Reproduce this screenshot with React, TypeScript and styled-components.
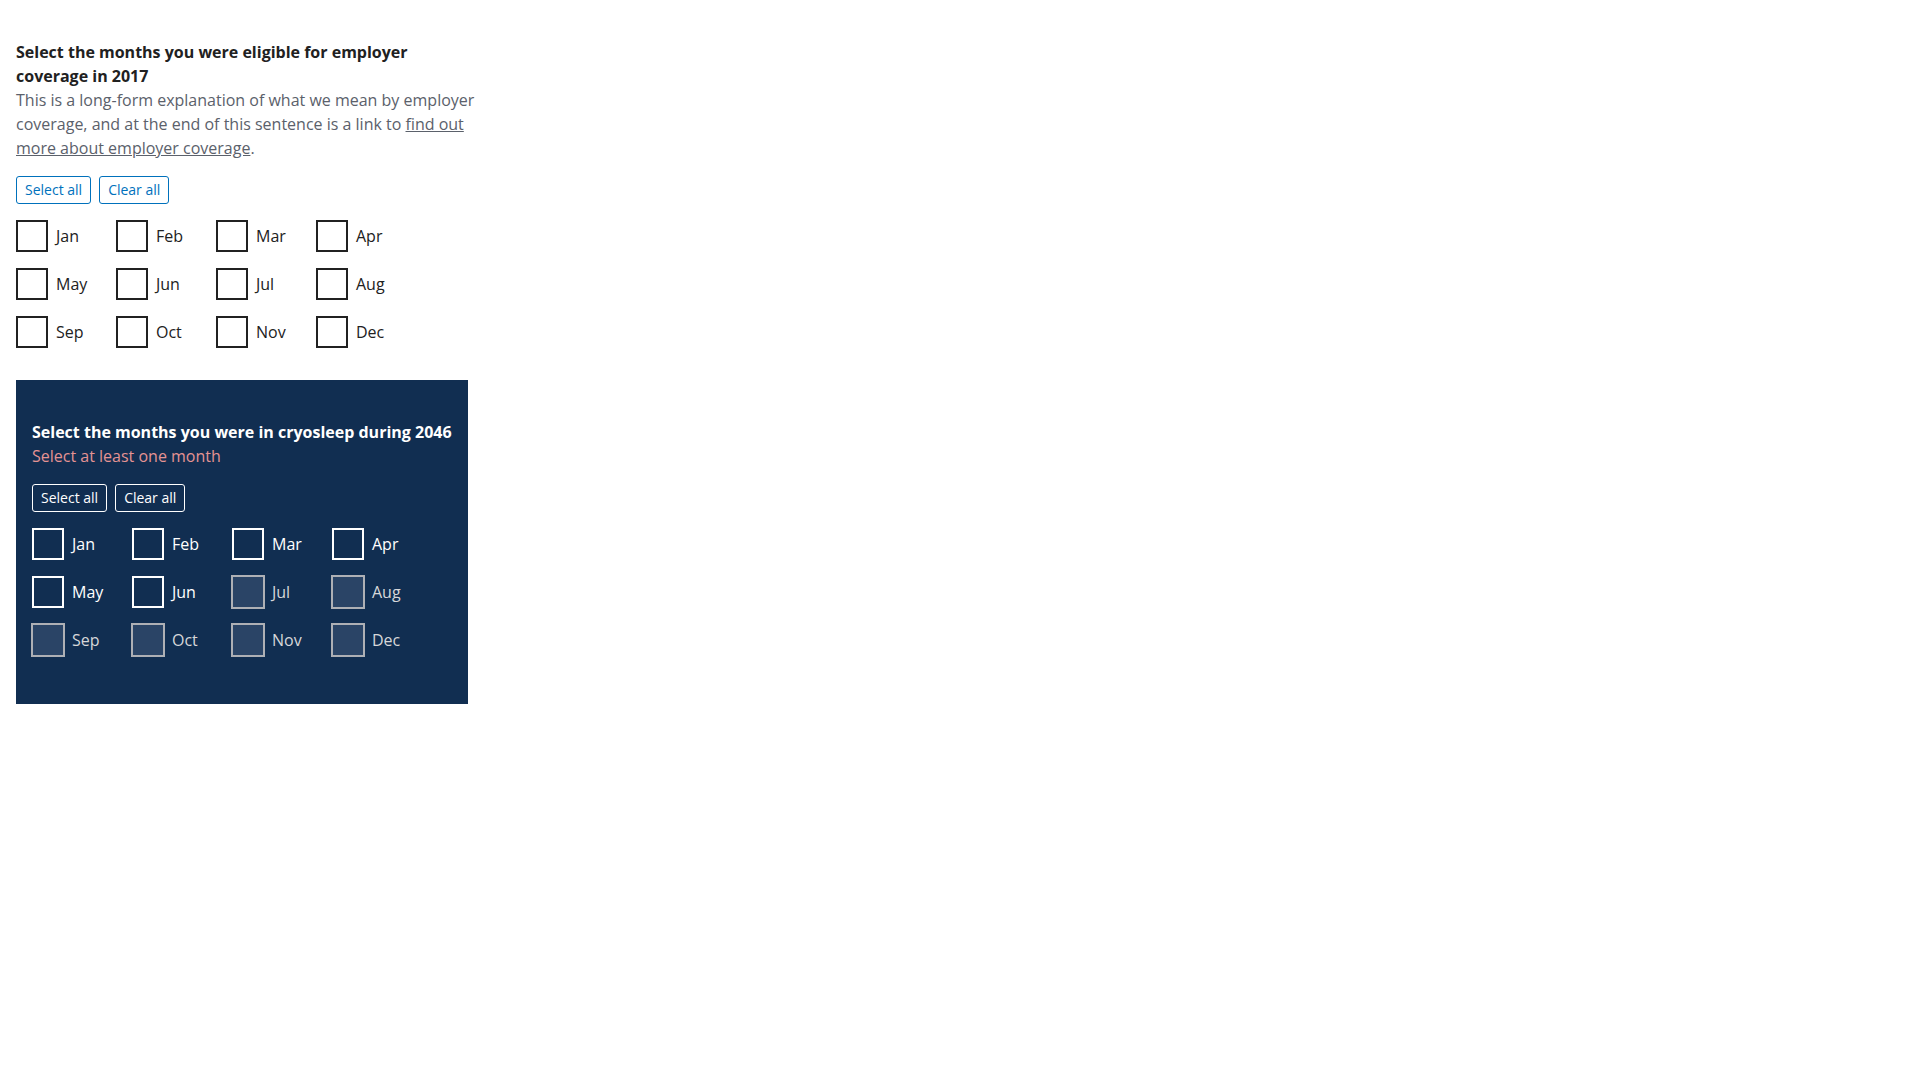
import React from "react";
import styled, { createGlobalStyle, css } from "styled-components";

const GlobalStyle = createGlobalStyle`
  html, body { margin: 0; padding: 0; background: #ffffff; }
  body { font-family: "Open Sans", "Liberation Sans", sans-serif; color: #212121; }
  * { box-sizing: border-box; }
`;

const Page = styled.div`
  padding: 16px;
  display: flex;
  flex-direction: column;
  align-items: flex-start;
`;

const Panel = styled.div`
  background: #112e51;
  width: 452px;
  padding: 16px 16px 48px;
  margin-top: 32px;
`;

const Fieldset = styled.fieldset`
  border: 0;
  padding: 0;
  margin: 24px 0 0;
  min-width: 0;
`;

const Legend = styled.legend<{ $inverse?: boolean }>`
  padding: 0;
  max-width: 460px;
  font-size: 16px;
  line-height: 24px;
  font-weight: 700;
  color: ${(p) => (p.$inverse ? "#ffffff" : "#212121")};
`;

const Hint = styled.div`
  max-width: 460px;
  font-size: 16px;
  line-height: 24px;
  color: #5b616b;
`;

const HintLink = styled.a`
  color: #5b616b;
  text-decoration: underline;
`;

const ErrorMsg = styled.div`
  font-size: 16px;
  line-height: 24px;
  color: #e59393;
`;

const ButtonRow = styled.div`
  display: flex;
  gap: 8px;
  margin-top: 16px;
`;

const SmallButton = styled.button<{ $inverse?: boolean }>`
  height: 28px;
  padding: 0 8px;
  border-radius: 3px;
  background: transparent;
  font-family: "Open Sans", "Liberation Sans", sans-serif;
  font-size: 14px;
  line-height: 26px;
  cursor: pointer;
  border: 1px solid ${(p) => (p.$inverse ? "#ffffff" : "#0071bc")};
  color: ${(p) => (p.$inverse ? "#ffffff" : "#0071bc")};
`;

const MonthGrid = styled.div`
  display: grid;
  grid-template-columns: repeat(4, 100px);
  row-gap: 16px;
  margin-top: 16px;
`;

const Choice = styled.label`
  display: flex;
  align-items: center;
  gap: 8px;
  height: 32px;
`;

const Box = styled.span<{ $inverse?: boolean; $disabled?: boolean }>`
  display: block;
  flex: none;
  width: 32px;
  height: 32px;
  border: 2px solid ${(p) => (p.$inverse ? "#ffffff" : "#212121")};
  background: transparent;
  ${(p) =>
    p.$disabled &&
    css`
      width: 34px;
      height: 34px;
      margin: -1px -1px -1px -1px;
      border-color: #aeb0b5;
      background: #2a4466;
    `}
`;

const ChoiceText = styled.span<{ $inverse?: boolean; $disabled?: boolean }>`
  font-size: 16px;
  line-height: 24px;
  color: ${(p) =>
    p.$disabled ? "#d6d7d9" : p.$inverse ? "#ffffff" : "#212121"};
`;

const MONTHS = ["Jan", "Feb", "Mar", "Apr", "May", "Jun", "Jul", "Aug", "Sep", "Oct", "Nov", "Dec"];

function Months({ inverse, disabledFrom }: { inverse?: boolean; disabledFrom?: number }) {
  return (
    <MonthGrid>
      {MONTHS.map((m, i) => {
        const disabled = disabledFrom !== undefined && i >= disabledFrom;
        return (
          <Choice key={m}>
            <Box $inverse={inverse} $disabled={disabled} />
            <ChoiceText $inverse={inverse} $disabled={disabled}>
              {m}
            </ChoiceText>
          </Choice>
        );
      })}
    </MonthGrid>
  );
}

export default function App() {
  return (
    <>
      <GlobalStyle />
      <Page>
        <Fieldset>
          <Legend>Select the months you were eligible for employer coverage in 2017</Legend>
          <Hint>
            This is a long-form explanation of what we mean by employer coverage, and at the end of
            this sentence is a link to <HintLink href="#">find out more about employer coverage</HintLink>.
          </Hint>
          <ButtonRow>
            <SmallButton>Select all</SmallButton>
            <SmallButton>Clear all</SmallButton>
          </ButtonRow>
          <Months />
        </Fieldset>
        <Panel>
          <Fieldset>
            <Legend $inverse>Select the months you were in cryosleep during 2046</Legend>
            <ErrorMsg>Select at least one month</ErrorMsg>
            <ButtonRow>
              <SmallButton $inverse>Select all</SmallButton>
              <SmallButton $inverse>Clear all</SmallButton>
            </ButtonRow>
            <Months inverse disabledFrom={6} />
          </Fieldset>
        </Panel>
      </Page>
    </>
  );
}
